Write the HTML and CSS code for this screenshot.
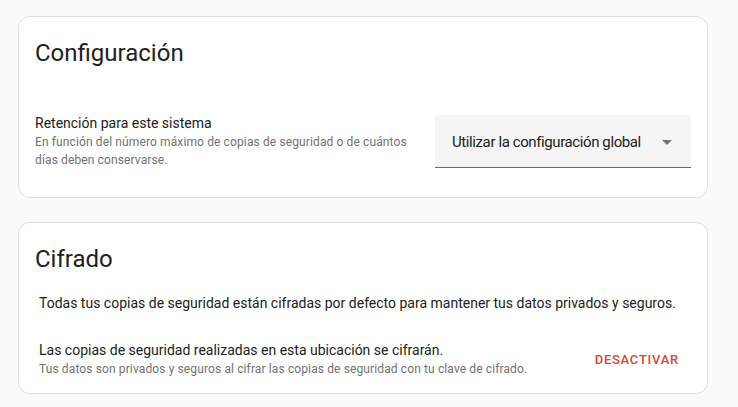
FILE: index.html
```html
<!DOCTYPE html>
<html lang="es">
<head>
    <meta charset="UTF-8">
    <meta name="viewport" content="width=device-width, initial-scale=1.0">
    <title>Configuración de copias de seguridad</title>
    <link rel="stylesheet" href="styles.css">
</head>
<body>

    <div class="page">
        <div class="card">
            <h1 class="card-header">Configuración</h1>
            <div class="card-content">
                <div class="setting-row">
                    <div class="setting-info">
                        <div class="setting-name">Retención para este sistema</div>
                        <div class="setting-desc">En función del número máximo de copias de seguridad o de cuántos días deben conservarse.</div>
                    </div>
                    <div class="select-box">
                        <span class="select-text">Utilizar la configuración global</span>
                        <span class="select-arrow"></span>
                    </div>
                </div>
            </div>
        </div>

        <div class="card">
            <h1 class="card-header">Cifrado</h1>
            <div class="card-content encryption">
                <p class="intro">Todas tus copias de seguridad están cifradas por defecto para mantener tus datos privados y seguros.</p>
                <div class="setting-row">
                    <div class="setting-info">
                        <div class="setting-name">Las copias de seguridad realizadas en esta ubicación se cifrarán.</div>
                        <div class="setting-desc">Tus datos son privados y seguros al cifrar las copias de seguridad con tu clave de cifrado.</div>
                    </div>
                    <button class="text-button">Desactivar</button>
                </div>
            </div>
        </div>
    </div>

</body>
</html>
```

FILE: styles.css
```css
body {
    font-family: Roboto, "Liberation Sans", Arial, sans-serif;
    margin: 0;
    padding: 0;
    background-color: #fafafa;
    color: #212121;
}
.page {
    padding: 16px 30px 0 18px;
    display: flex;
    flex-direction: column;
    gap: 24px;
}
.card {
    background-color: #fff;
    border: 1px solid #e0e0e0;
    border-radius: 12px;
}
.card-header {
    margin: 0;
    padding: 20px 16px 0;
    font-size: 24px;
    font-weight: 400;
    line-height: 32px;
    color: #212121;
}
.card-content {
    padding: 44px 16px 28px;
}
.setting-row {
    display: flex;
    align-items: center;
}
.setting-info {
    flex: 1;
    margin-right: 16px;
}
.setting-name {
    font-size: 14px;
    line-height: 20px;
}
.setting-desc {
    font-size: 12px;
    line-height: 18px;
    letter-spacing: 0.12px;
    color: #727272;
}
.select-box {
    width: 256px;
    height: 53px;
    box-sizing: border-box;
    background-color: #f5f5f5;
    border-bottom: 1px solid #6b6b6b;
    border-radius: 4px 4px 0 0;
    display: flex;
    align-items: center;
    justify-content: space-between;
    padding: 3px 19px 0 17px;
}
.select-text {
    font-size: 15px;
    letter-spacing: -0.4px;
    color: #212121;
    white-space: nowrap;
}
.select-arrow {
    width: 0;
    height: 0;
    border-left: 5px solid transparent;
    border-right: 5px solid transparent;
    border-top: 5px solid #757575;
}
.encryption {
    padding: 18px 20px 15px;
}
.intro {
    margin: 0 0 27px;
    font-size: 14px;
    line-height: 20px;
}
.text-button {
    font-family: inherit;
    background: none;
    border: none;
    color: #db4437;
    font-size: 13px;
    font-weight: 500;
    letter-spacing: 0.75px;
    text-transform: uppercase;
    padding: 8px 8px;
    cursor: pointer;
}
```
